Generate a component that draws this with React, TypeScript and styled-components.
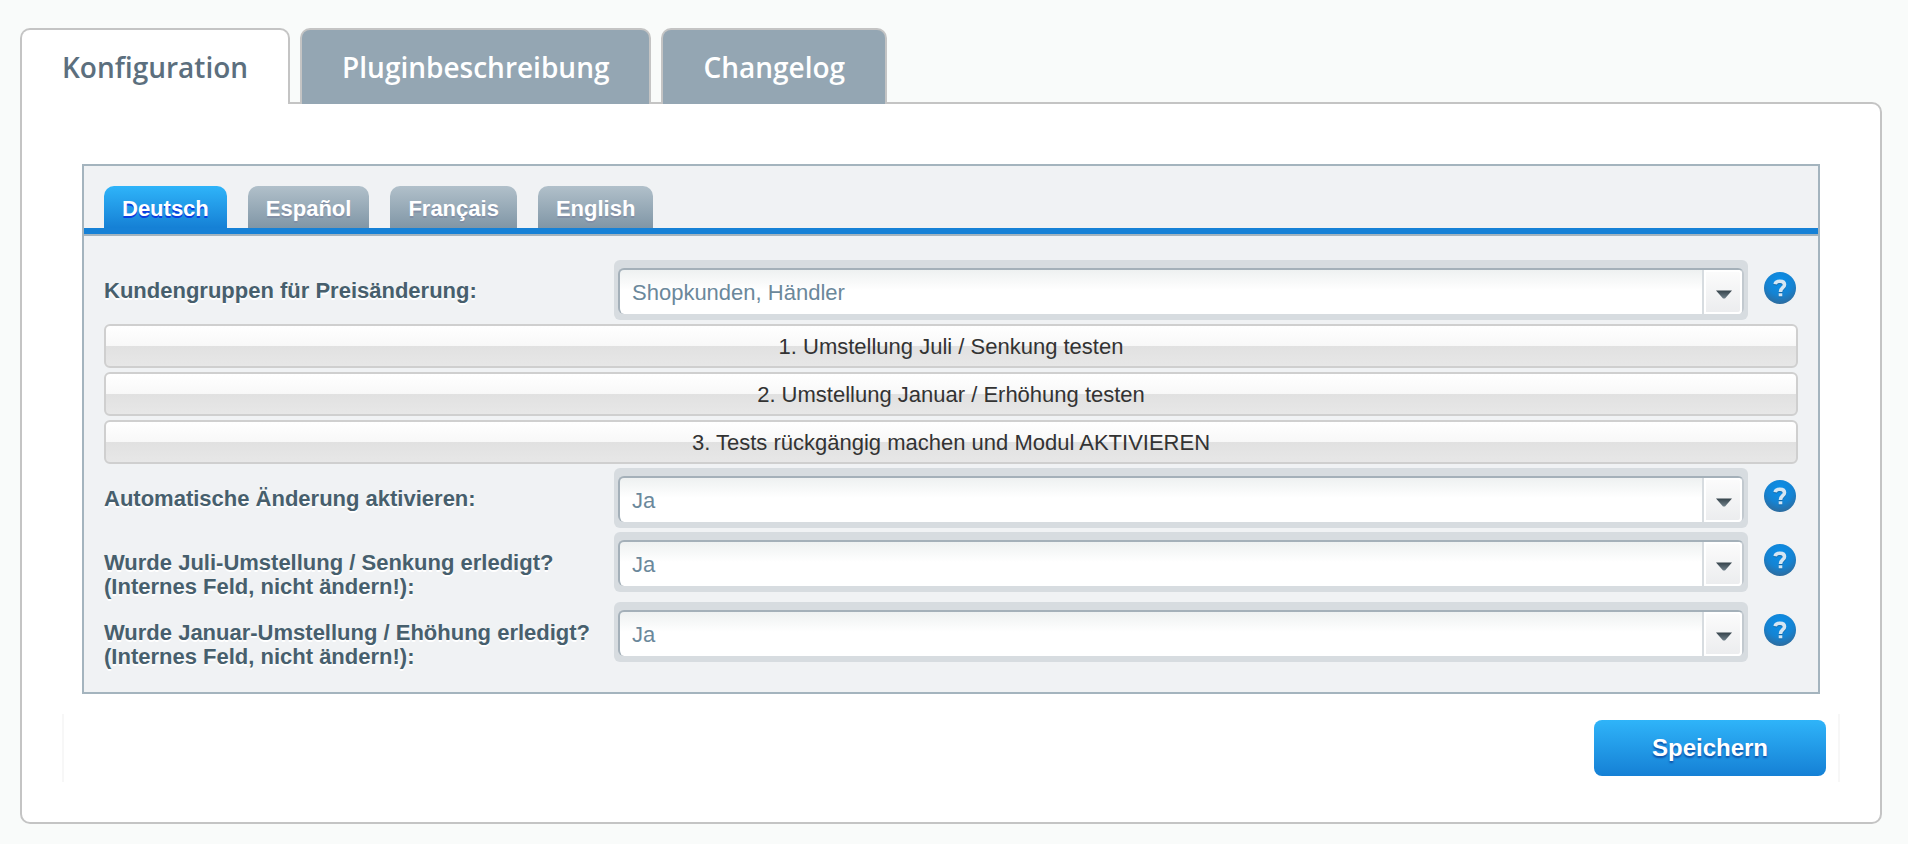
import React, { useState } from "react";
import styled, { createGlobalStyle, css } from "styled-components";

const GlobalStyle = createGlobalStyle`
  *, *::before, *::after { box-sizing: border-box; }
  body {
    margin: 0;
    background: #f9fbfa;
    font-family: "Liberation Sans", Arial, sans-serif;
    font-size: 22px;
    line-height: 24px;
  }
  button, select { font: inherit; margin: 0; }
`;

const Page = styled.main`
  padding: 28px 26px 20px 20px;
`;

const MainTabs = styled.div`
  display: flex;
  gap: 10px;
  position: relative;
  margin-bottom: -2px;
`;

const MainTab = styled.button<{ $active: boolean }>`
  height: 76px;
  padding: 0 40px;
  border: 2px solid #c4c4c4;
  border-bottom: 0;
  border-radius: 10px 10px 0 0;
  background: ${(p) => (p.$active ? "#ffffff" : "#94a6b3")};
  color: ${(p) => (p.$active ? "#5c6f7e" : "#ffffff")};
  font-family: "Open Sans", sans-serif;
  font-size: 28px;
  font-weight: 600;
  line-height: 40px;
  cursor: pointer;
`;

const Panel = styled.section`
  padding: 60px 40px 40px;
  background: #ffffff;
  border: 2px solid #c4c4c4;
  border-radius: 0 10px 10px 10px;
`;

const Fieldset = styled.div`
  margin: 0 20px;
  background: #f0f2f4;
  border: 2px solid #a4b4be;
`;

const LanguageTabs = styled.div`
  display: flex;
  gap: 21px;
  padding: 20px 20px 0;
  border-bottom: 6px solid #1681d6;
`;

const LanguageTab = styled.button<{ $active: boolean }>`
  height: 42px;
  padding: 3px 18px 0;
  border: 0;
  border-radius: 10px 10px 0 0;
  color: #ffffff;
  font-weight: bold;
  cursor: pointer;
  ${(p) =>
    p.$active
      ? css`
          background: linear-gradient(#2fb4f9, #1580d5);
          text-shadow: 0 2px 0 #0a3ee0;
        `
      : css`
          background: linear-gradient(#b1c0ca, #8096a6);
          text-shadow: 0 2px 0 #8290a6;
        `}
`;

const Form = styled.form`
  display: flex;
  flex-direction: column;
  gap: 4px;
  padding: 24px 20px;
  border-top: 2px solid #a4b4be;
`;

const Row = styled.div`
  display: grid;
  grid-template-columns: 490px minmax(0, 1fr) 32px;
  column-gap: 16px;
  align-items: start;
  padding-right: 2px;
`;

const Label = styled.label`
  margin-bottom: -1px;
  padding-top: 19px;
  color: #475f6d;
  font-weight: bold;
  text-shadow: 0 2px 0 #ffffff;
  white-space: pre-line;
`;

const Frame = styled.div`
  display: grid;
  margin-left: 4px;
  padding: 8px 4px 6px;
  background: #d7dce0;
  border-radius: 6px;
`;

const Select = styled.select`
  grid-area: 1 / 1;
  width: 100%;
  height: 46px;
  padding: 2px 56px 0 12px;
  appearance: none;
  border: solid;
  border-width: 2px 2px 0 2px;
  border-color: #a4b0b9 #c2c9cf #d7dce0 #a4b0b9;
  border-radius: 6px;
  background: linear-gradient(#eef1f1, #ffffff 20px);
  color: #6b889b;
  line-height: 24px;
`;

const Trigger = styled.span`
  grid-area: 1 / 1;
  justify-self: end;
  display: flex;
  align-items: center;
  justify-content: center;
  width: 40px;
  height: 44px;
  margin: 2px 2px 0 0;
  padding: 4px 0 0 2px;
  border-left: 2px solid #d7dce0;
  border-radius: 0 4px 4px 0;
  background: linear-gradient(#fcfcfc, #ebecee);
  box-shadow: inset 0 0 0 2px #ffffff;
  pointer-events: none;
`;

const HelpButton = styled.button`
  display: block;
  width: 32px;
  height: 32px;
  margin-top: 12px;
  padding: 0;
  border: 0;
  background: none;
  cursor: pointer;
`;

const ActionButton = styled.button`
  height: 44px;
  padding: 2px 20px 0;
  border: 2px solid #cfcfcf;
  border-radius: 6px;
  background: linear-gradient(#ffffff, #f8f8f8 50%, #e1e1e1 50%, #e7e7e7);
  color: #333333;
  cursor: pointer;
`;

const Footer = styled.div`
  display: flex;
  justify-content: flex-end;
  margin-top: 20px;
  padding: 6px 12px;
  border: solid #f7f7f7;
  border-width: 0 2px;
`;

const SaveButton = styled.button`
  width: 232px;
  height: 56px;
  border: 0;
  border-radius: 8px;
  background: linear-gradient(#2fb4f9, #1580d5);
  color: #ffffff;
  font-size: 24px;
  font-weight: bold;
  text-shadow: 0 2px 2px #0c4fa8;
  cursor: pointer;
`;

const HelpIcon = () => (
  <svg width="32" height="32" viewBox="0 0 32 32" aria-hidden="true">
    <defs>
      <radialGradient id="helpFill" cx="0.5" cy="0.3" r="0.7">
        <stop offset="0" stopColor="#0890ec" />
        <stop offset="0.6" stopColor="#1583d2" />
        <stop offset="1" stopColor="#2d6c9f" />
      </radialGradient>
    </defs>
    <circle cx="16" cy="16" r="16" fill="url(#helpFill)" />
    <g fill="none" stroke="#1268a8" strokeWidth="3.600" transform="translate(0 1)">
      <path d="M11.200 12.200Q11.500 9.200 16 9.200C19 9.200 20.500 10.700 20.500 12.700C20.500 16 16.500 15.500 16.500 20" />
      <path d="M16.500 21.300v3" />
    </g>
    <g fill="none" stroke="#d5e6f3" strokeWidth="3.600">
      <path d="M11.200 12.200Q11.500 9.200 16 9.200C19 9.200 20.500 10.700 20.500 12.700C20.500 16 16.500 15.500 16.500 20" />
      <path d="M16.500 21.300v3" />
    </g>
  </svg>
);

const Arrow = () => (
  <svg width="16" height="9" viewBox="0 0 16 9" aria-hidden="true">
    <defs>
      <linearGradient id="arrowFill" x1="0" y1="0" x2="0" y2="1">
        <stop offset="0" stopColor="#35434b" />
        <stop offset="1" stopColor="#71818b" />
      </linearGradient>
    </defs>
    <path d="M0 0.500h16L9 8.500H7z" fill="url(#arrowFill)" />
  </svg>
);

type FieldProps = { id: string; label: string; options: string[] };

const SelectRow = ({ id, label, options }: FieldProps) => (
  <Row>
    <Label htmlFor={id}>{label}</Label>
    <Frame>
      <Select id={id} defaultValue={options[0]}>
        {options.map((o) => (
          <option key={o}>{o}</option>
        ))}
      </Select>
      <Trigger>
        <Arrow />
      </Trigger>
    </Frame>
    <HelpButton type="button" aria-label="Hilfe">
      <HelpIcon />
    </HelpButton>
  </Row>
);

const mainTabs = ["Konfiguration", "Pluginbeschreibung", "Changelog"];
const languages = ["Deutsch", "Español", "Français", "English"];
const actions = [
  "1. Umstellung Juli / Senkung testen",
  "2. Umstellung Januar / Erhöhung testen",
  "3. Tests rückgängig machen und Modul AKTIVIEREN",
];
const yesNo = ["Ja", "Nein"];

export default function App() {
  const [tab, setTab] = useState(mainTabs[0]);
  const [language, setLanguage] = useState(languages[0]);

  return (
    <>
      <GlobalStyle />
      <Page>
        <MainTabs role="tablist">
          {mainTabs.map((t) => (
            <MainTab key={t} role="tab" aria-selected={t === tab} $active={t === tab} onClick={() => setTab(t)}>
              {t}
            </MainTab>
          ))}
        </MainTabs>
        <Panel>
          <Fieldset>
            <LanguageTabs role="tablist">
              {languages.map((l) => (
                <LanguageTab
                  key={l}
                  role="tab"
                  aria-selected={l === language}
                  $active={l === language}
                  onClick={() => setLanguage(l)}
                >
                  {l}
                </LanguageTab>
              ))}
            </LanguageTabs>
            <Form id="config" onSubmit={(e) => e.preventDefault()}>
              <SelectRow id="groups" label="Kundengruppen für Preisänderung:" options={["Shopkunden, Händler"]} />
              {actions.map((a) => (
                <ActionButton key={a} type="button">
                  {a}
                </ActionButton>
              ))}
              <SelectRow id="auto" label="Automatische Änderung aktivieren:" options={yesNo} />
              <SelectRow
                id="july"
                label={"Wurde Juli-Umstellung / Senkung erledigt?\n(Internes Feld, nicht ändern!):"}
                options={yesNo}
              />
              <SelectRow
                id="january"
                label={"Wurde Januar-Umstellung / Ehöhung erledigt?\n(Internes Feld, nicht ändern!):"}
                options={yesNo}
              />
            </Form>
          </Fieldset>
          <Footer>
            <SaveButton type="submit" form="config">
              Speichern
            </SaveButton>
          </Footer>
        </Panel>
      </Page>
    </>
  );
}
